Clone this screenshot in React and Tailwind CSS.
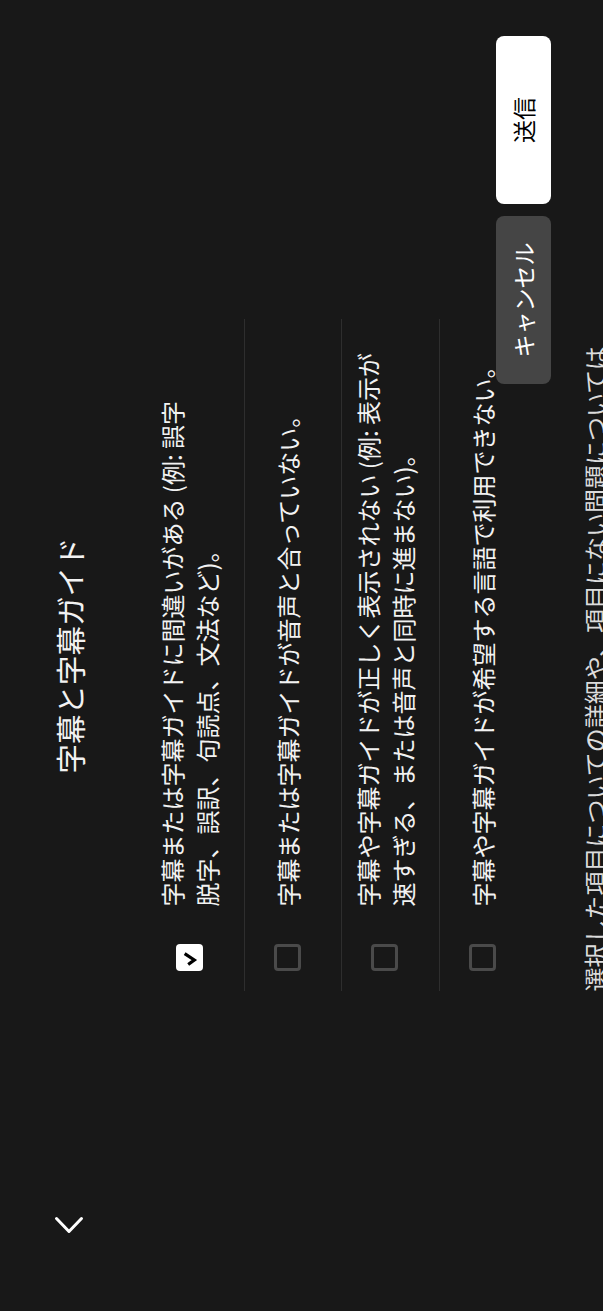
import React from 'react';

const rows = [
  { checked: true, lines: ['字幕または字幕ガイドに間違いがある (例: 誤字', '脱字、誤訳、句読点、文法など)。'] },
  { checked: false, lines: ['字幕または字幕ガイドが音声と合っていない。'] },
  { checked: false, lines: ['字幕や字幕ガイドが正しく表示されない (例: 表示が', '速すぎる、または音声と同時に進まない)。'] },
  { checked: false, lines: ['字幕や字幕ガイドが希望する言語で利用できない。'] },
];

const Checkbox = ({ checked }) =>
  checked ? (
    <div className="w-[27px] h-[27px] shrink-0 rounded-[4px] bg-white">
      <svg width="27" height="27" viewBox="0 0 27 27">
        <path d="M7.5 13.5 L11 18.3 L16.5 10" fill="none" stroke="#000" strokeWidth="3.2" strokeLinecap="square" />
      </svg>
    </div>
  ) : (
    <div className="w-[27px] h-[27px] shrink-0 rounded-[4px] border-[3px] border-[#4a4a4a]" />
  );

const App = () => {
  return (
    <div className="relative w-[603px] h-[1311px] overflow-hidden bg-[#181818] font-['Noto_Sans_CJK_JP','Noto_Sans',sans-serif]">
      {/* landscape screen, turned a quarter to the left */}
      <div className="relative w-[1311px] h-[603px] origin-top-left [transform:translateY(1311px)_rotate(-90deg)] bg-[#181818] text-[#f2f2f2]">
        <div className="grid grid-cols-[1fr_auto_1fr] items-center h-[137px]">
          <div className="pl-[70px]">
            <svg width="32" height="32" viewBox="0 0 32 32">
              <path d="M22.5 3.5 L9.5 16 L22.5 28.5" fill="none" stroke="#fff" strokeWidth="3" strokeLinecap="round" strokeLinejoin="round" />
            </svg>
          </div>
          <h1 className="text-[29.5px] leading-[40px] font-normal">字幕と字幕ガイド</h1>
          <div />
        </div>

        <div className="mx-auto w-[672px] mt-[9px]">
          {rows.map((row, i) => (
            <div
              key={i}
              className={`flex items-center h-[97.6px] pb-[11px] px-[20px] gap-[38px] ${i > 0 ? 'border-t border-[#2e2e2e]' : ''}`}
            >
              <Checkbox checked={row.checked} />
              <p className="text-[24px] leading-[35px] whitespace-nowrap">
                {row.lines.map((l, j) => (
                  <React.Fragment key={j}>
                    {j > 0 && <br />}
                    {l}
                  </React.Fragment>
                ))}
              </p>
            </div>
          ))}
          <p className="mt-[41px] text-[24px] leading-[35px] whitespace-nowrap text-[#dcdcdc]">
            選択した項目についての詳細や、項目にない問題については
            <br />
            コメント欄にご記入ください。
          </p>
        </div>

        <div className="absolute right-[36px] bottom-[52px] flex gap-[12px]">
          <button className="w-[168px] h-[55px] rounded-[8px] bg-[#454545] text-white text-[23px]">
            キャンセル
          </button>
          <button className="w-[168px] h-[55px] rounded-[8px] bg-white text-black text-[23px]">
            送信
          </button>
        </div>
      </div>
    </div>
  );
};

export default App;
